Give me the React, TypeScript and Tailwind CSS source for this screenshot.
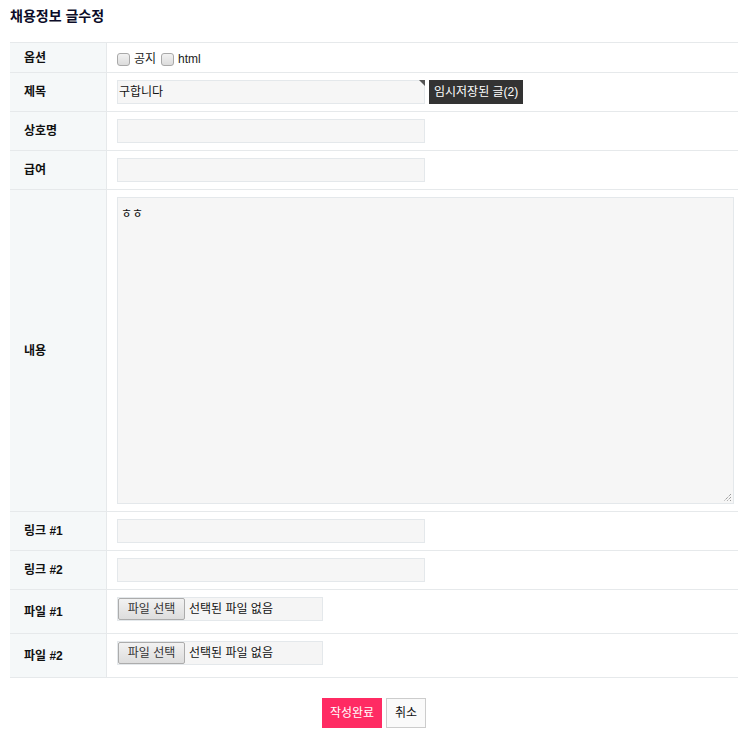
import React from "react";

const font = { fontFamily: '"Liberation Sans", "Noto Sans CJK KR", sans-serif' };

function Row({ label, h, children, pb }: { label: string; h: string; children?: React.ReactNode; pb?: boolean }) {
  return (
    <div className={`flex border-b border-[#e6e9eb] ${h}`}>
      <div className="w-[97px] shrink-0 bg-[#f5f8f9] border-r border-[#e6e9eb] flex items-center pl-[14px] text-[12px] font-bold text-[#111]">
        {label}
      </div>
      <div className={`flex-1 pl-[10px] pr-[4px] pt-[7px] ${pb ? "pb-[12px]" : "pb-[7px]"} flex items-start`}>{children}</div>
    </div>
  );
}

function Input({ value }: { value?: string }) {
  return (
    <div className="w-[308px] h-[24px] bg-[#f6f6f6] border border-[#e4e8eb] flex items-center pl-[1px] text-[12px] text-[#111] relative">
      {value}
    </div>
  );
}

function FileInput() {
  return (
    <div className="w-[206px] h-[24px] bg-[#f5f5f5] border border-[#e4e8eb] flex items-center text-[12px] text-[#111]">
      <div className="h-[22px] w-[67px] ml-0 bg-gradient-to-b from-[#f2f2f2] to-[#dddddd] border border-[#acacac] rounded-[2px] flex items-center justify-center text-[#333]">
        파일 선택
      </div>
      <span className="ml-[4px]">선택된 파일 없음</span>
    </div>
  );
}

export default function App() {
  return (
    <div className="w-[748px] h-[732px] bg-white" style={font}>
      <div className="h-[42px] pl-[10px] pt-[6px] text-[14px] font-bold text-[#0c0c28]">채용정보 글수정</div>
      <div className="mx-[10px] border-t border-[#e6e9eb]">
        <Row label="옵션" h="h-[30px]">
          <div className="flex items-center text-[12px] text-[#222]">
            <span className="w-[13px] h-[13px] border border-[#a9a9a9] rounded-[3px] bg-gradient-to-b from-[#f2f2f2] to-[#dcdcdc] mr-[4px]" />
            <span>공지</span>
            <span className="w-[13px] h-[13px] border border-[#a9a9a9] rounded-[3px] bg-gradient-to-b from-[#f2f2f2] to-[#dcdcdc] ml-[5px] mr-[4px]" />
            <span>html</span>
          </div>
        </Row>
        <Row label="제목" h="h-[39px]">
          <div className="relative">
            <Input value="구합니다" />
            <div className="absolute right-0 top-0 w-0 h-0 border-t-[6px] border-l-[6px] border-t-[#555] border-l-transparent" />
          </div>
          <div className="ml-[4px] h-[24px] px-[5px] bg-[#333] text-white text-[12px] flex items-center">임시저장된 글(2)</div>
        </Row>
        <Row label="상호명" h="h-[39px]">
          <Input />
        </Row>
        <Row label="급여" h="h-[39px]">
          <Input />
        </Row>
        <Row label="내용" h="h-[322px]">
          <div className="w-[617px] h-[307px] bg-[#f6f6f6] border border-[#e4e8eb] text-[12px] text-[#111] pl-[3px] pt-[7px] relative">
            ㅎㅎ
            <svg className="absolute right-[1px] bottom-[1px]" width="10" height="10" viewBox="0 0 10 10">
              <path d="M9 2 L2 9 M9 5 L5 9 M9 8 L8 9" stroke="#777" strokeWidth="1" strokeDasharray="1 1" />
            </svg>
          </div>
        </Row>
        <Row label="링크 #1" h="h-[39px]">
          <Input />
        </Row>
        <Row label="링크 #2" h="h-[39px]">
          <Input />
        </Row>
        <Row label="파일 #1" h="h-[44px]" pb>
          <FileInput />
        </Row>
        <Row label="파일 #2" h="h-[44px]" pb>
          <FileInput />
        </Row>
      </div>
      <div className="flex justify-center gap-[4px] mt-[20px]">
        <div className="w-[60px] h-[30px] bg-[#ff2b63] text-white text-[12px] flex items-center justify-center">작성완료</div>
        <div className="w-[40px] h-[30px] bg-[#fafafa] border border-[#cccccc] text-[#111] text-[12px] flex items-center justify-center">취소</div>
      </div>
    </div>
  );
}
